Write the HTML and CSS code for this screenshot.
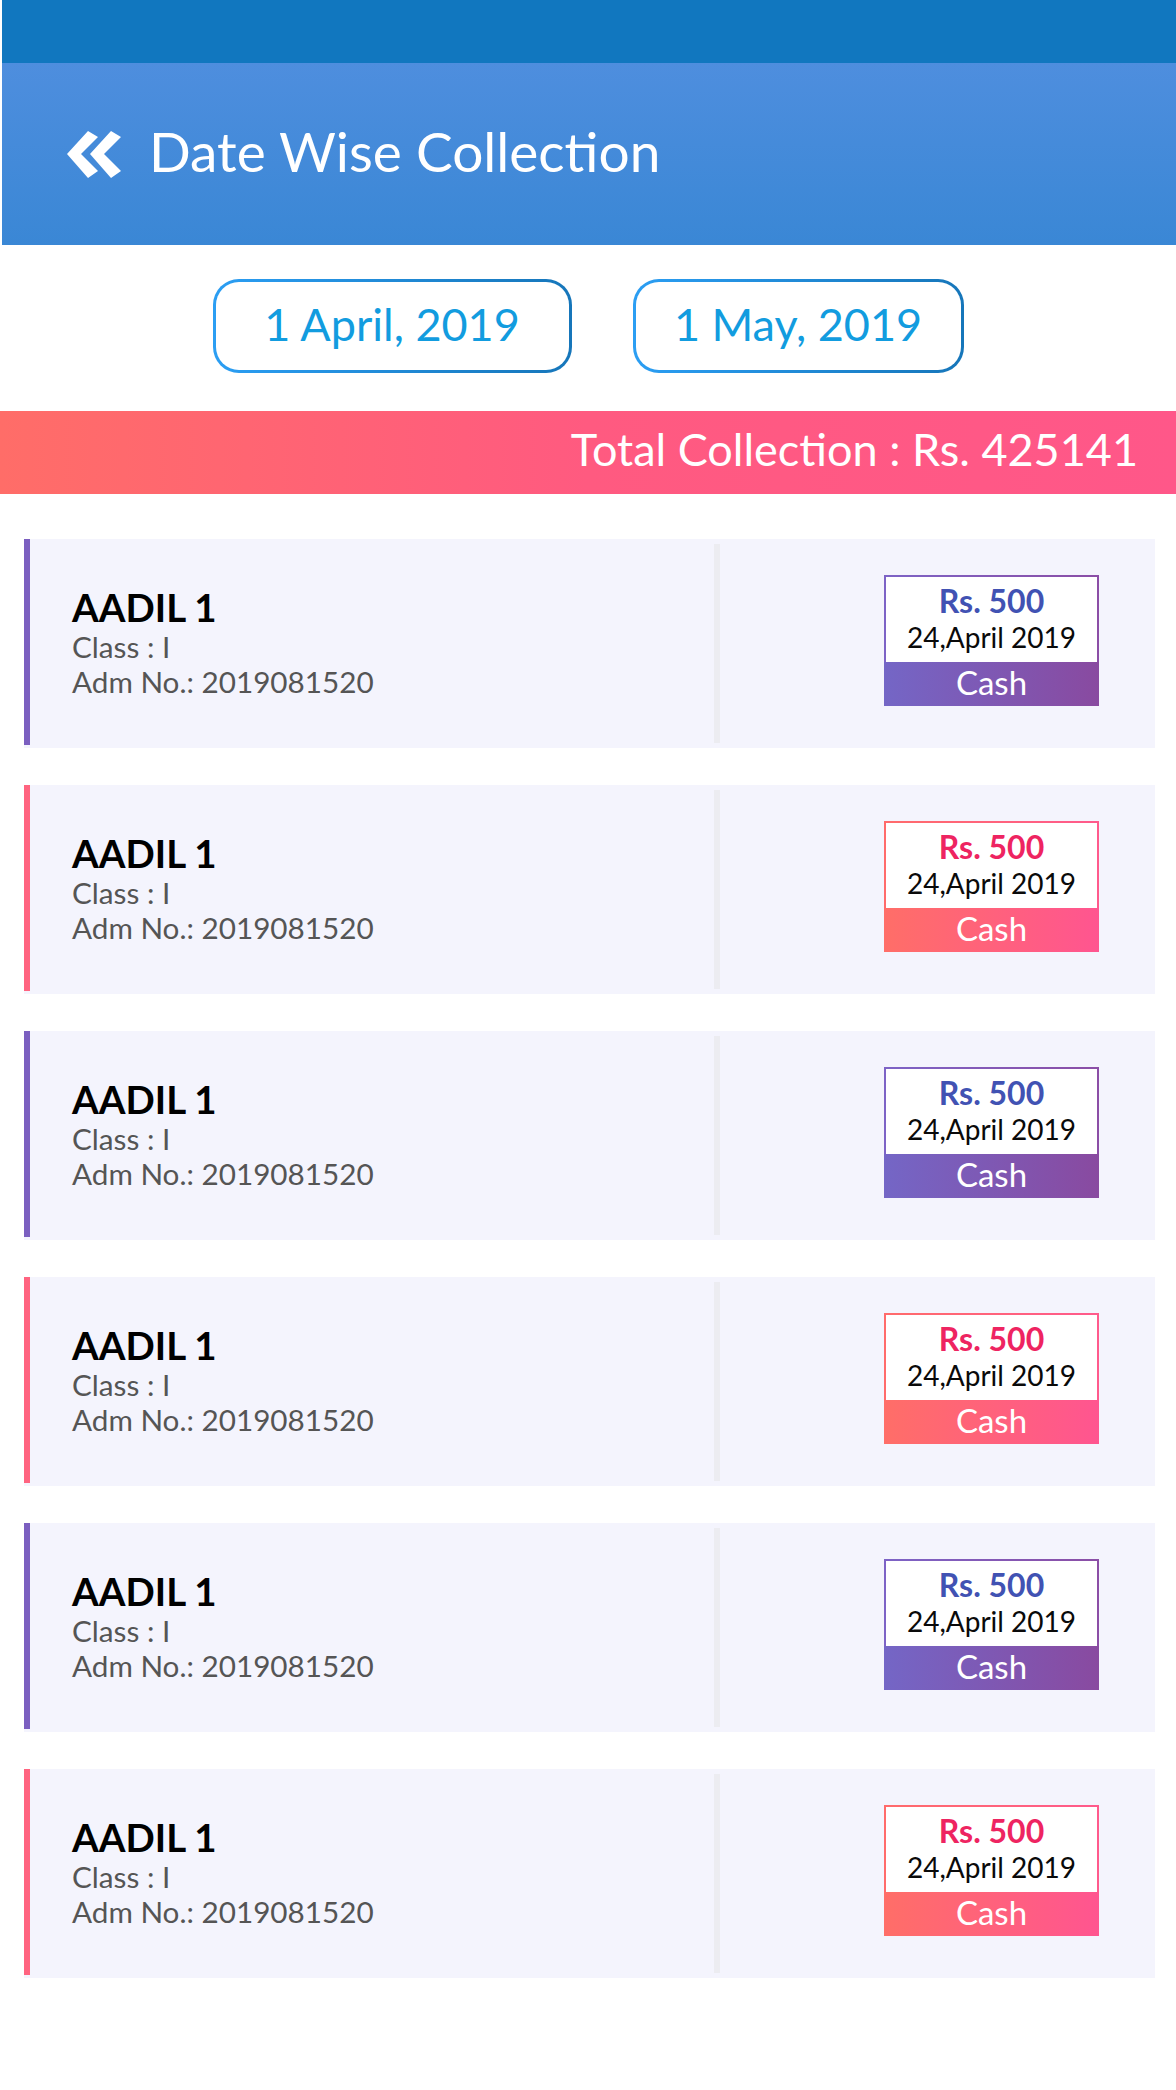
FILE: index.html
```html
<!DOCTYPE html>
<html lang="en">
<head>
<meta charset="utf-8">
<title>Date Wise Collection</title>
<link rel="stylesheet" href="styles.css">
</head>
<body>
<div class="topbar"></div>
<header class="header">
  <svg class="back" width="60" height="52" viewBox="0 0 60 52" aria-hidden="true">
    <polygon points="1,26 22,3 32,9 15,26 32,43 22,50" fill="#fff"/>
    <polygon points="24,26 45,3 55,9 38,26 55,43 45,50" fill="#fff"/>
  </svg>
  <h1 class="title">Date Wise Collection</h1>
</header>

<div class="dates">
  <div class="date date-from">1 April, 2019</div>
  <div class="date date-to">1 May, 2019</div>
</div>

<div class="total">Total Collection : Rs. 425141</div>

<div class="list">
  <div class="card purple">
    <span class="accent"></span>
    <div class="info">
      <div class="name">AADIL 1</div>
      <div class="meta">Class : I</div>
      <div class="meta">Adm No.: 2019081520</div>
    </div>
    <span class="divider"></span>
    <div class="pay">
      <div class="badge">
        <div class="badge-top"><div class="amount">Rs. 500</div><div class="paydate">24,April 2019</div></div>
        <div class="mode">Cash</div>
      </div>
    </div>
  </div>

  <div class="card pink">
    <span class="accent"></span>
    <div class="info">
      <div class="name">AADIL 1</div>
      <div class="meta">Class : I</div>
      <div class="meta">Adm No.: 2019081520</div>
    </div>
    <span class="divider"></span>
    <div class="pay">
      <div class="badge">
        <div class="badge-top"><div class="amount">Rs. 500</div><div class="paydate">24,April 2019</div></div>
        <div class="mode">Cash</div>
      </div>
    </div>
  </div>

  <div class="card purple">
    <span class="accent"></span>
    <div class="info">
      <div class="name">AADIL 1</div>
      <div class="meta">Class : I</div>
      <div class="meta">Adm No.: 2019081520</div>
    </div>
    <span class="divider"></span>
    <div class="pay">
      <div class="badge">
        <div class="badge-top"><div class="amount">Rs. 500</div><div class="paydate">24,April 2019</div></div>
        <div class="mode">Cash</div>
      </div>
    </div>
  </div>

  <div class="card pink">
    <span class="accent"></span>
    <div class="info">
      <div class="name">AADIL 1</div>
      <div class="meta">Class : I</div>
      <div class="meta">Adm No.: 2019081520</div>
    </div>
    <span class="divider"></span>
    <div class="pay">
      <div class="badge">
        <div class="badge-top"><div class="amount">Rs. 500</div><div class="paydate">24,April 2019</div></div>
        <div class="mode">Cash</div>
      </div>
    </div>
  </div>

  <div class="card purple">
    <span class="accent"></span>
    <div class="info">
      <div class="name">AADIL 1</div>
      <div class="meta">Class : I</div>
      <div class="meta">Adm No.: 2019081520</div>
    </div>
    <span class="divider"></span>
    <div class="pay">
      <div class="badge">
        <div class="badge-top"><div class="amount">Rs. 500</div><div class="paydate">24,April 2019</div></div>
        <div class="mode">Cash</div>
      </div>
    </div>
  </div>

  <div class="card pink">
    <span class="accent"></span>
    <div class="info">
      <div class="name">AADIL 1</div>
      <div class="meta">Class : I</div>
      <div class="meta">Adm No.: 2019081520</div>
    </div>
    <span class="divider"></span>
    <div class="pay">
      <div class="badge">
        <div class="badge-top"><div class="amount">Rs. 500</div><div class="paydate">24,April 2019</div></div>
        <div class="mode">Cash</div>
      </div>
    </div>
  </div>
</div>
</body>
</html>
```

FILE: styles.css
```css
* { box-sizing: border-box; }

html, body {
  margin: 0;
  padding: 0;
  background: #ffffff;
}

body {
  font-family: Lato, "Open Sans", "Liberation Sans", sans-serif;
  width: 1176px;
  min-height: 2090px;
}

.topbar {
  height: 63px;
  margin-left: 2px;
  background: #1177bf;
}

.header {
  height: 182px;
  margin-left: 2px;
  background: linear-gradient(180deg, #4e8ede 0%, #3a87d5 100%);
  display: flex;
  align-items: center;
  padding-left: 64px;
}

.back {
  display: block;
  flex: none;
}

.title {
  margin: 0 0 0 23px;
  font-size: 55px;
  font-weight: 400;
  color: #ffffff;
  line-height: 56px;
  padding-bottom: 7px;
}

.dates {
  display: flex;
  justify-content: center;
  gap: 61px;
  margin-top: 34px;
}

.date {
  height: 94px;
  border: 3px solid transparent;
  border-radius: 26px;
  background:
    linear-gradient(#ffffff, #ffffff) padding-box,
    linear-gradient(90deg, #2b9ef3 0%, #1676ba 100%) border-box;
  display: flex;
  align-items: center;
  justify-content: center;
  font-size: 45px;
  color: #129cdf;
  padding-bottom: 5px;
}

.date-from { width: 359px; }
.date-to { width: 331px; }

.total {
  margin-top: 38px;
  height: 83px;
  background: linear-gradient(90deg, #ff6d68 0%, #ff5a80 50%, #ff5789 100%);
  color: #ffffff;
  font-size: 45px;
  display: flex;
  align-items: center;
  justify-content: flex-end;
  padding-right: 38px;
  padding-bottom: 8px;
}

.list {
  display: flex;
  flex-direction: column;
  gap: 37px;
  margin: 45px 21px 0 24px;
}

.card {
  height: 209px;
  background: #f4f4fd;
  display: flex;
}

.accent {
  flex: none;
  width: 6px;
  height: 206px;
}

.purple .accent { background: #7b5fc0; }
.pink .accent { background: #ff6480; }

.info {
  flex: 0 0 684px;
  display: flex;
  flex-direction: column;
  justify-content: center;
  padding-left: 42px;
  padding-bottom: 4px;
}

.name {
  font-size: 38.5px;
  font-weight: 700;
  color: #000000;
  line-height: 44px;
}

.meta {
  font-size: 29.7px;
  color: #555555;
  line-height: 35px;
}

.divider {
  flex: none;
  width: 6px;
  margin: 5px 0;
  background: #ececf1;
}

.pay {
  flex: 1;
  display: flex;
  align-items: center;
  justify-content: flex-end;
  padding-right: 56px;
  padding-bottom: 6px;
}

.badge {
  width: 215px;
}

.badge-top {
  background: #ffffff;
  border: 2px solid transparent;
  border-bottom: 0;
  padding: 6px 0 7px;
  text-align: center;
}

.purple .badge-top {
  background:
    linear-gradient(#ffffff, #ffffff) padding-box,
    linear-gradient(90deg, #7d63c6 0%, #8b4ea6 100%) border-box;
}

.pink .badge-top {
  background:
    linear-gradient(#ffffff, #ffffff) padding-box,
    linear-gradient(90deg, #ff6b6b 0%, #ff5a8c 100%) border-box;
}

.amount {
  font-size: 32px;
  font-weight: 700;
  line-height: 36px;
}

.purple .amount { color: #4152b3; }
.pink .amount { color: #ee2461; }

.paydate {
  font-size: 28px;
  line-height: 36px;
  color: #0a0a0a;
}

.mode {
  height: 44px;
  font-size: 33px;
  line-height: 40px;
  color: #ffffff;
  text-align: center;
}

.purple .mode { background: linear-gradient(90deg, #7466c6 0%, #894aa0 100%); }
.pink .mode { background: linear-gradient(90deg, #ff6e68 0%, #ff5590 100%); }
```
